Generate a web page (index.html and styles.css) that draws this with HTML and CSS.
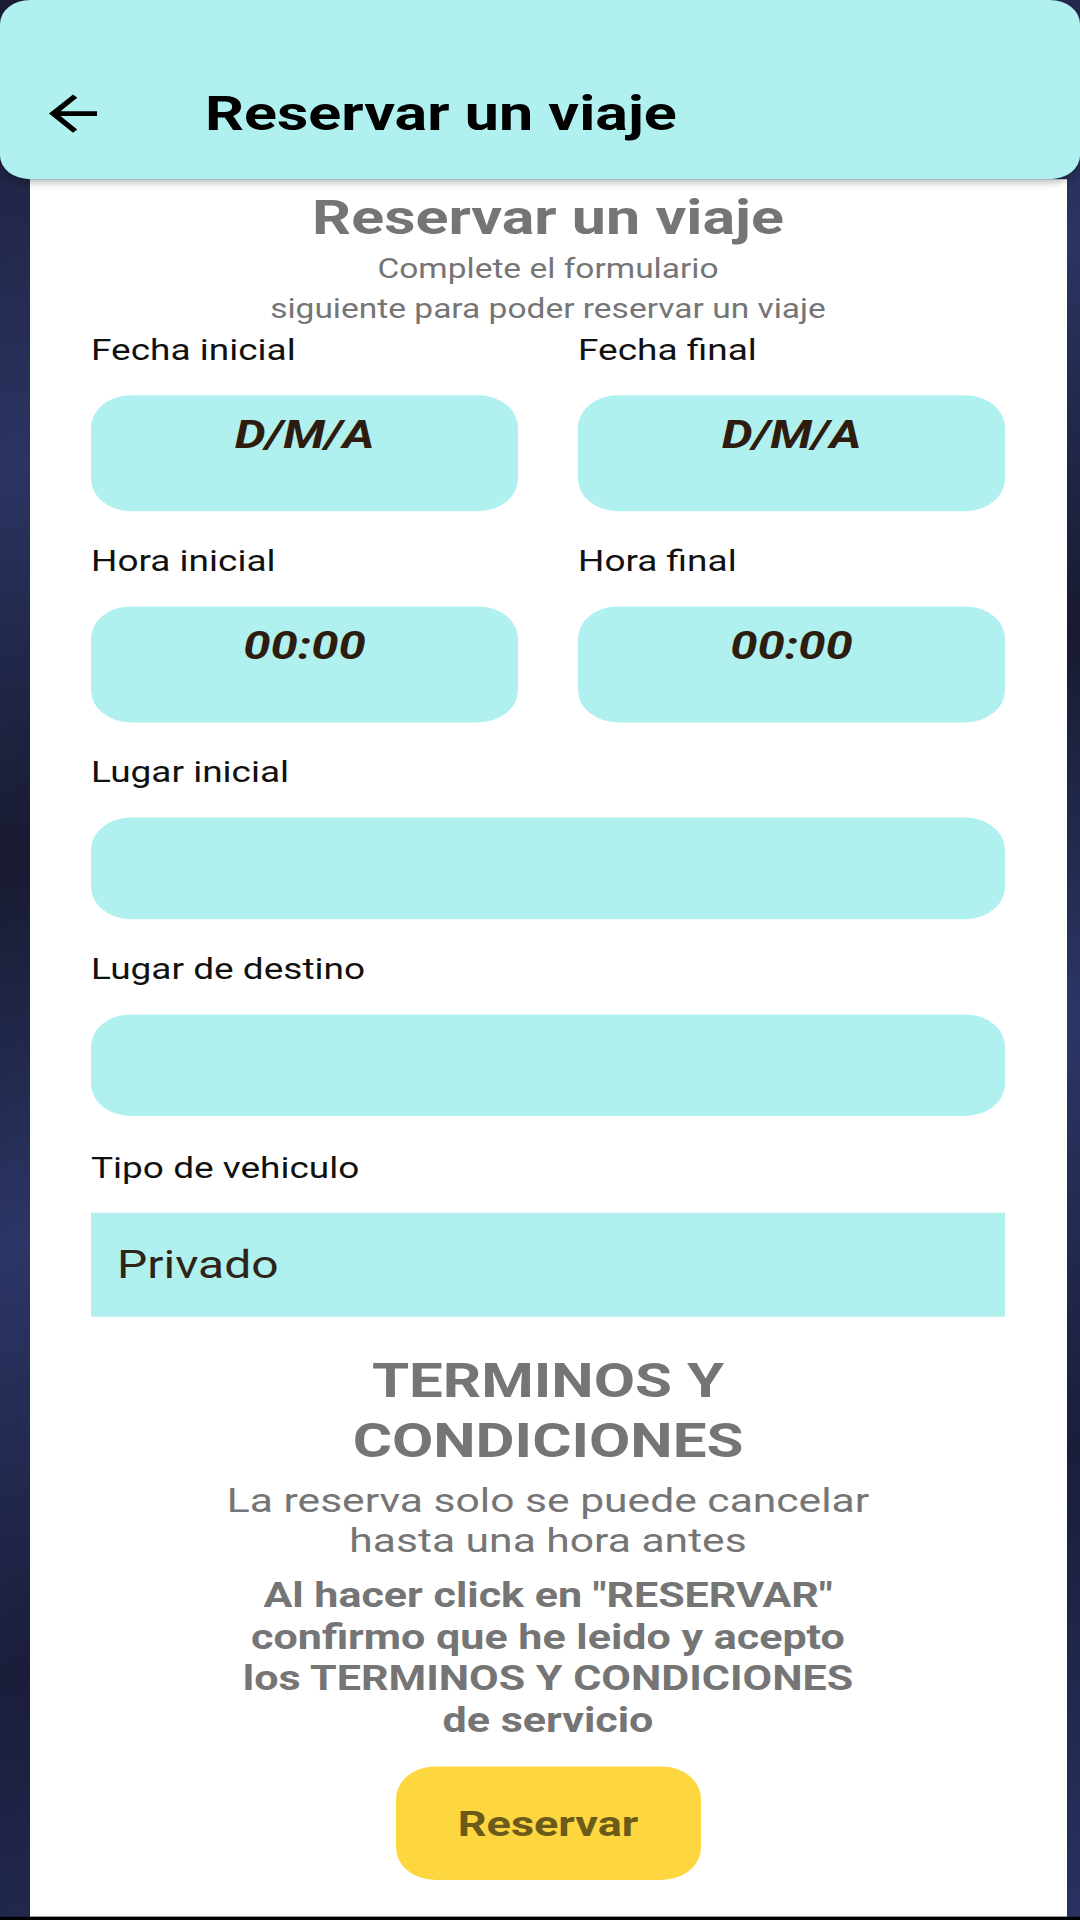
FILE: index.html
```html
<!DOCTYPE html>
<html lang="es">
<head>
    <meta charset="UTF-8">
    <meta name="viewport" content="width=device-width, initial-scale=1.0">
    <title>Reservar un viaje</title>
    <link rel="stylesheet" href="styles.css">
</head>
<body>

<div class="frame">
    <div class="screen">
        <header class="appbar">
            <svg class="back-icon" viewBox="0 0 24 24" width="72" height="72">
                <path d="M20 11H7.83l5.59-5.59L12 4l-8 8 8 8 1.41-1.41L7.83 13H20v-2z"/>
            </svg>
            <h1>Reservar un viaje</h1>
        </header>

        <main class="card">
            <h2 class="card-title">Reservar un viaje</h2>
            <p class="subtitle">Complete el formulario<br>siguiente para poder reservar un viaje</p>

            <div class="row row-first">
                <div class="field">
                    <label>Fecha inicial</label>
                    <div class="pill">D/M/A</div>
                </div>
                <div class="field">
                    <label>Fecha final</label>
                    <div class="pill">D/M/A</div>
                </div>
            </div>

            <div class="row">
                <div class="field">
                    <label>Hora inicial</label>
                    <div class="pill">00:00</div>
                </div>
                <div class="field">
                    <label>Hora final</label>
                    <div class="pill">00:00</div>
                </div>
            </div>

            <div class="field">
                <label>Lugar inicial</label>
                <div class="input"></div>
            </div>

            <div class="field">
                <label>Lugar de destino</label>
                <div class="input"></div>
            </div>

            <div class="field field-vehicle">
                <label>Tipo de vehiculo</label>
                <div class="spinner">Privado</div>
            </div>

            <h3 class="terms-title">TERMINOS Y<br>CONDICIONES</h3>
            <p class="terms-text">La reserva solo se puede cancelar<br>hasta una hora antes</p>
            <p class="terms-bold">Al hacer click en "RESERVAR"<br>confirmo que he leido y acepto<br>los TERMINOS Y CONDICIONES<br>de servicio</p>

            <button class="btn-reservar">Reservar</button>
        </main>

        <div class="nav-edge"></div>
    </div>
</div>

</body>
</html>
```

FILE: styles.css
```css
html {
    overflow: hidden;
}

body {
    margin: 0;
    background-color: #000;
    font-family: 'Roboto', 'Noto Sans', sans-serif;
}

.frame {
    width: 1080px;
    height: 1920px;
    overflow: hidden;
}

/* the capture is a 1080x2400 phone screen squeezed to 1920 tall */
.screen {
    width: 1080px;
    height: 2400px;
    display: flex;
    flex-direction: column;
    transform: scaleY(0.8);
    transform-origin: top left;
    background: linear-gradient(165deg, #1b1c36 0%, #2b3462 22%, #171a30 40%, #2c3666 58%, #1a1d3a 78%, #283160 100%);
}

.appbar {
    height: 224px;
    box-sizing: border-box;
    flex-shrink: 0;
    display: flex;
    align-items: center;
    padding: 60px 0 0 37px;
    background-color: #b0f1f0;
    border-radius: 30px;
    box-shadow: 0 4px 8px rgba(0, 0, 0, 0.25);
    position: relative;
    z-index: 1;
}

.back-icon {
    fill: #000;
}

.appbar h1 {
    margin: 0 0 0 96px;
    font-size: 61px;
    font-weight: 700;
    color: #000;
}

.card {
    flex: 1;
    margin: 0 13px 0 30px;
    padding: 13px 62px 0 61px;
    background-color: #fff;
    border-bottom: 1px solid #bbb;
    display: flex;
    flex-direction: column;
}

.card-title {
    margin: 0;
    text-align: center;
    font-size: 61px;
    line-height: 70px;
    font-weight: 700;
    color: #757575;
}

.subtitle {
    margin: 4px 0 0;
    text-align: center;
    font-size: 33.5px;
    line-height: 50px;
    color: #757575;
}

.row {
    display: flex;
    gap: 60px;
}

.row .field {
    flex: 1;
}

.field {
    display: flex;
    flex-direction: column;
    margin-top: 38px;
}

.row-first .field {
    margin-top: 2px;
}

.field-vehicle {
    margin-top: 40px;
}

label {
    font-size: 37px;
    line-height: 50px;
    color: #111;
    margin-bottom: 31px;
}

.pill {
    height: 145px;
    box-sizing: border-box;
    padding-top: 20px;
    border-radius: 40px;
    background-color: #b0f1f0;
    text-align: center;
    font-size: 49px;
    line-height: 60px;
    font-weight: 700;
    font-style: italic;
    color: #2e1c0e;
}

.input {
    height: 127px;
    border-radius: 40px;
    background-color: #b0f1f0;
}

.spinner {
    height: 130px;
    display: flex;
    align-items: center;
    padding-left: 26px;
    background-color: #b0f1f0;
    font-size: 48px;
    color: #2e2418;
}

.terms-title {
    margin: 42px 0 0;
    text-align: center;
    font-size: 60px;
    line-height: 75px;
    font-weight: 700;
    color: #757575;
}

.terms-text {
    margin: 12px 0 0;
    text-align: center;
    font-size: 42.6px;
    line-height: 50px;
    color: #757575;
}

.terms-bold {
    margin: 18px 0 0;
    text-align: center;
    font-size: 43px;
    line-height: 52px;
    font-weight: 700;
    color: #757575;
}

.btn-reservar {
    align-self: center;
    margin-top: 32px;
    width: 305px;
    height: 142px;
    border: none;
    border-radius: 40px;
    background-color: #fdd640;
    font-family: 'Roboto', sans-serif;
    font-size: 45px;
    font-weight: 700;
    color: #6b5a1a;
}

.nav-edge {
    height: 4px;
    flex-shrink: 0;
    background-color: #000;
}
```
